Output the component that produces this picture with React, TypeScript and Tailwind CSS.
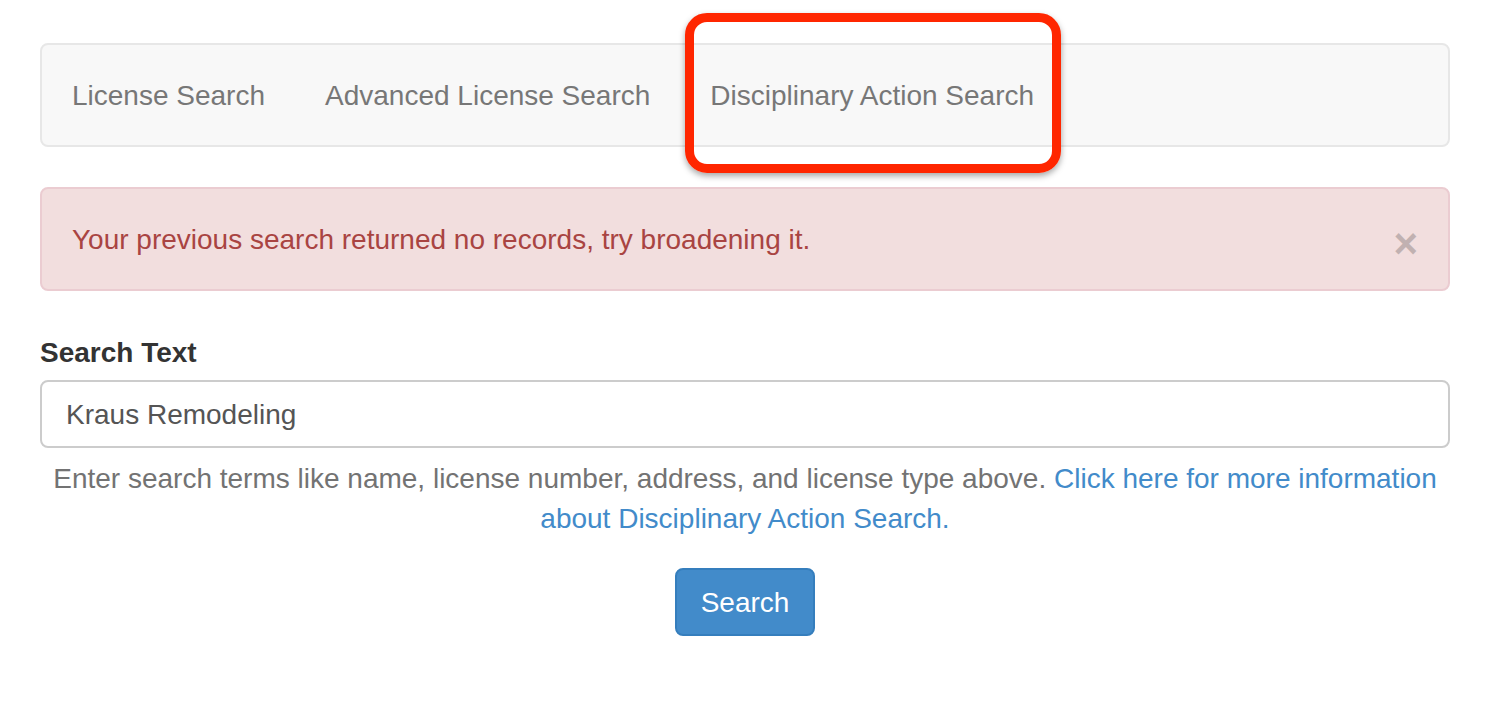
import React from "react";

export default function App() {
  return (
    <div className="relative min-h-[704px] bg-white pt-[43px] pl-[40px] pr-[58px] font-['Liberation_Sans',Arial,sans-serif] text-[28px] leading-[40px] text-[#333]">
      {/* Nav */}
      <div className="flex h-[104px] rounded-[8px] border-2 border-[#e7e7e7] bg-[#f8f8f8]">
        <a className="px-[30px] pt-[31px] pb-[29px] text-[#777]">License Search</a>
        <a className="px-[30px] pt-[31px] pb-[29px] text-[#777]">Advanced License Search</a>
        <a className="px-[30px] pt-[31px] pb-[29px] text-[#777]">Disciplinary Action Search</a>
      </div>

      {/* Alert */}
      <div className="mt-[40px] flex h-[104px] items-start justify-between overflow-hidden rounded-[8px] border-2 border-[#ebccd1] bg-[#f2dede] pt-[31px] pl-[30px] pr-[30px] text-[#a94442]">
        <span>Your previous search returned no records, try broadening it.</span>
        <span className="mt-[4px] text-[42px] font-bold leading-[40px] text-black opacity-20">×</span>
      </div>

      {/* Form */}
      <div className="mt-[40px]">
        <label className="block pt-[2px] font-bold text-[#333]">Search Text</label>
        <div className="mt-[7px] flex h-[68px] items-center rounded-[8px] border-2 border-[#ccc] bg-white px-[24px] pt-[2px] text-[#555]">
          Kraus Remodeling
        </div>
        <p className="mt-[11px] text-center text-[#737373]">
          Enter search terms like name, license number, address, and license type above.{" "}
          <a className="text-[#428bca]">
            Click here for more information about Disciplinary Action Search.
          </a>
        </p>
        <div className="mt-[29px] flex justify-center">
          <button className="h-[68px] rounded-[8px] border-2 border-[#357ebd] bg-[#428bca] px-[24px] pt-[2px] text-white">
            Search
          </button>
        </div>
      </div>

      {/* Annotation highlight */}
      <div className="pointer-events-none absolute left-[685px] top-[13px] h-[160px] w-[376px] rounded-[22px] border-[9px] border-[#ff2600] shadow-[0_3px_6px_rgba(0,0,0,0.35)]" />
    </div>
  );
}
